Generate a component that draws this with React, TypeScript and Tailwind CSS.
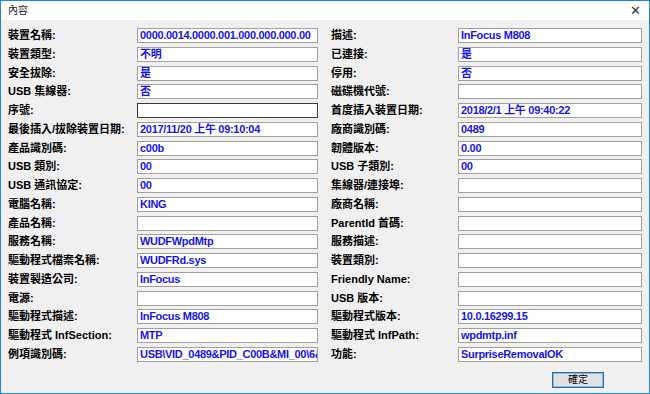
const FONT = {
  fontFamily: '"Liberation Sans", "Noto Sans CJK TC", sans-serif',
};

type Row = { label: string; value: string; dark?: boolean };

const leftRows: Row[] = [
  { label: "裝置名稱:", value: "0000.0014.0000.001.000.000.000.00" },
  { label: "裝置類型:", value: "不明" },
  { label: "安全拔除:", value: "是" },
  { label: "USB 集線器:", value: "否" },
  { label: "序號:", value: "", dark: true },
  { label: "最後插入/拔除裝置日期:", value: "2017/11/20 上午 09:10:04" },
  { label: "產品識別碼:", value: "c00b" },
  { label: "USB 類別:", value: "00" },
  { label: "USB 通訊協定:", value: "00" },
  { label: "電腦名稱:", value: "KING" },
  { label: "產品名稱:", value: "" },
  { label: "服務名稱:", value: "WUDFWpdMtp" },
  { label: "驅動程式檔案名稱:", value: "WUDFRd.sys" },
  { label: "裝置製造公司:", value: "InFocus" },
  { label: "電源:", value: "" },
  { label: "驅動程式描述:", value: "InFocus M808" },
  { label: "驅動程式 InfSection:", value: "MTP" },
  { label: "例項識別碼:", value: "USB\\VID_0489&PID_C00B&MI_00\\6&" },
];

const rightRows: Row[] = [
  { label: "描述:", value: "InFocus M808" },
  { label: "已連接:", value: "是" },
  { label: "停用:", value: "否" },
  { label: "磁碟機代號:", value: "" },
  { label: "首度插入裝置日期:", value: "2018/2/1 上午 09:40:22" },
  { label: "廠商識別碼:", value: "0489" },
  { label: "韌體版本:", value: "0.00" },
  { label: "USB 子類別:", value: "00" },
  { label: "集線器/連接埠:", value: "" },
  { label: "廠商名稱:", value: "" },
  { label: "ParentId 首碼:", value: "" },
  { label: "服務描述:", value: "" },
  { label: "裝置類別:", value: "" },
  { label: "Friendly Name:", value: "" },
  { label: "USB 版本:", value: "" },
  { label: "驅動程式版本:", value: "10.0.16299.15" },
  { label: "驅動程式 InfPath:", value: "wpdmtp.inf" },
  { label: "功能:", value: "SurpriseRemovalOK" },
];

function Field({ row, width }: { row: Row; width: string }) {
  return (
    <div className="flex h-[18.75px] items-start">
      <div className="flex-1 h-[15px] flex items-center text-[11px] font-bold text-black whitespace-nowrap leading-none">
        {row.label}
      </div>
      <div
        className={`${width} h-[15px] bg-white border ${
          row.dark ? "border-[#3c3c3c]" : "border-[#a0a0a0]"
        } flex items-center px-[2px] overflow-hidden`}
      >
        <span className="text-[11px] font-bold tracking-[-0.3px] text-[#1515e6] whitespace-nowrap leading-none">
          {row.value}
        </span>
      </div>
    </div>
  );
}

export default function App() {
  return (
    <div
      className="w-[650px] h-[394px] border border-[#1c86d8] bg-[#f0f0f0] flex flex-col overflow-hidden"
      style={FONT}
    >
      {/* title bar */}
      <div className="h-[19px] bg-white flex items-center justify-between pl-[7px] pr-[8px]">
        <span className="text-[10px] text-[#222] leading-none">內容</span>
        <span className="text-[13px] text-[#333] leading-none">✕</span>
      </div>

      <div className="flex gap-[13px] pl-[7px] pr-[7px] pt-[8px]">
        <div className="w-[310px] flex flex-col">
          {leftRows.map((r) => (
            <Field key={r.label} row={r} width="w-[181px]" />
          ))}
        </div>
        <div className="flex-1 flex flex-col">
          {rightRows.map((r) => (
            <Field key={r.label} row={r} width="w-[184px]" />
          ))}
        </div>
      </div>

      <div className="flex justify-end pr-[45px] pt-[6px]">
        <button className="w-[52px] h-[16px] border border-[#0078d7] bg-[#e1e1e1] flex items-center justify-center">
          <span className="w-full h-full border border-[#adadad] flex items-center justify-center text-[10px] text-black leading-none">
            確定
          </span>
        </button>
      </div>
    </div>
  );
}
